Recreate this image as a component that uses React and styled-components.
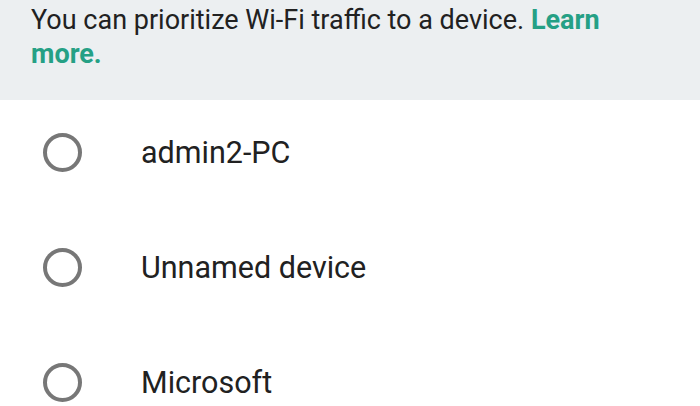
import React from "react";
import styled, { createGlobalStyle } from "styled-components";

const Global = createGlobalStyle`
  html, body { margin: 0; padding: 0; background: #fff; }
  body { font-family: Roboto, "Noto Sans", sans-serif; overflow: hidden; }
`;

const Page = styled.div`
  width: 700px;
  height: 406px;
  display: flex;
  flex-direction: column;
  background: #fff;
  overflow: hidden;
`;

const Banner = styled.div`
  flex: none;
  height: 100px;
  box-sizing: border-box;
  background: #eceff1;
  padding: 3px 60px 0 31px;
  font-size: 27px;
  line-height: 34px;
  color: #212121;
`;

const Link = styled.a`
  color: #25a085;
  font-weight: 700;
  text-decoration: none;
`;

const List = styled.div`
  flex: none;
  display: flex;
  flex-direction: column;
  gap: 11px;
`;

const Row = styled.label`
  flex: none;
  height: 104px;
  display: flex;
  align-items: center;
  padding-left: 43px;
`;

const Radio = styled.span`
  width: 39px;
  height: 39px;
  box-sizing: border-box;
  border: 4px solid #777;
  border-radius: 50%;
  flex: none;
`;

const Name = styled.span`
  margin-left: 59px;
  font-size: 30.5px;
  color: #212121;
`;

const devices = ["admin2-PC", "Unnamed device", "Microsoft"];

export default function App() {
  return (
    <Page>
      <Global />
      <Banner>
        You can prioritize Wi-Fi traffic to a device. <Link>Learn more.</Link>
      </Banner>
      <List>
        {devices.map((d) => (
          <Row key={d}>
            <Radio />
            <Name>{d}</Name>
          </Row>
        ))}
      </List>
    </Page>
  );
}
